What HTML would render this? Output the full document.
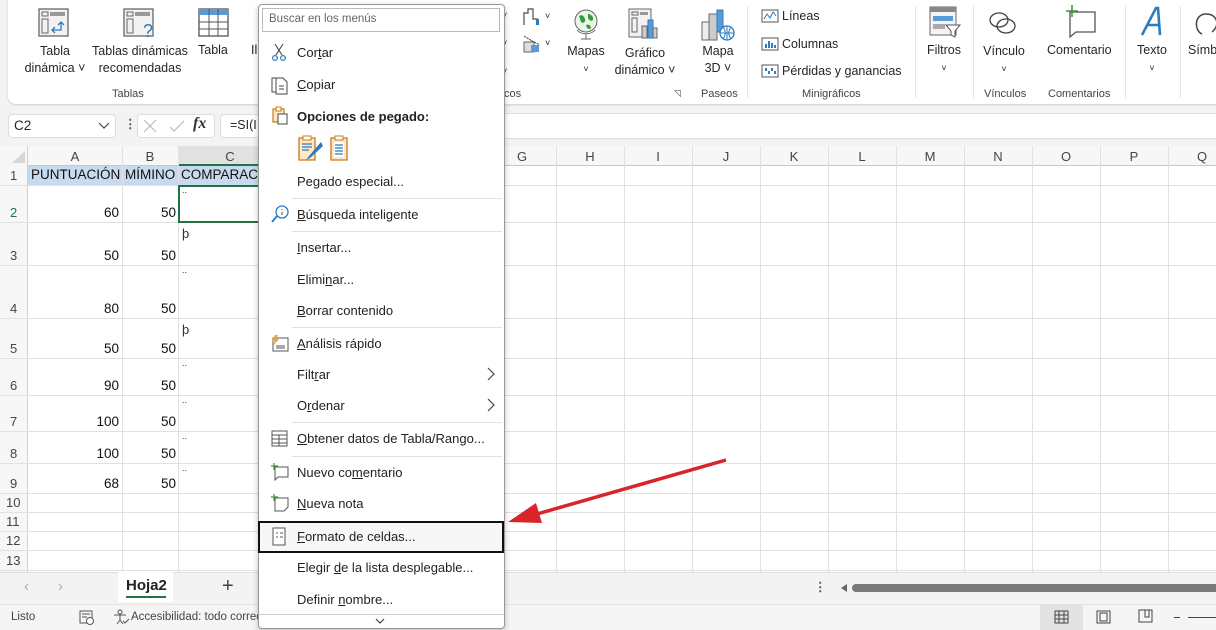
<!DOCTYPE html>
<html><head><meta charset="utf-8"><style>
*{margin:0;padding:0;box-sizing:border-box}
body{width:1216px;height:630px;overflow:hidden;background:#f3f3f3;font-family:"Liberation Sans",sans-serif;font-size:12.5px;color:#262626;position:relative}
.a{position:absolute}
.t{position:absolute;white-space:nowrap}
.c{text-align:center}
.vl{position:absolute;width:1px;background:#dcdcdc}
.hl{position:absolute;height:1px;background:#e1e1e1}
.mi{position:absolute;left:297px;font-size:13px;color:#222;white-space:nowrap}
.sep{position:absolute;left:292px;width:210px;height:1px;background:#e0e0e0}
u{text-decoration:underline}
</style></head><body>
<!-- ribbon -->
<div class="a" style="left:8px;top:-8px;width:1220px;height:112px;background:#fff;border-radius:8px;box-shadow:0 1px 2px #ccc"></div>
<svg class="a" style="left:38px;top:8px" width="32" height="30"><rect x="1" y="1" width="29" height="27" fill="#f2f2f2" stroke="#666" stroke-width="1.3"/><rect x="4" y="4" width="6" height="4" fill="none" stroke="#666"/><rect x="12" y="4" width="15" height="4" fill="#999"/><rect x="4" y="11" width="6" height="14" fill="none" stroke="#666"/><path d="M14 22h9v-8M20 17l3-3 3 3M17 19l-3 3 3 3" fill="none" stroke="#2b7bc0" stroke-width="1.3"/></svg>
<div class="t c" style="left:20px;top:43px;width:70px;line-height:17px">Tabla<br>dinámica ˅</div>
<svg class="a" style="left:123px;top:8px" width="36" height="30"><rect x="1" y="1" width="29" height="27" fill="#f2f2f2" stroke="#666" stroke-width="1.3"/><rect x="4" y="4" width="6" height="4" fill="none" stroke="#666"/><rect x="12" y="4" width="15" height="4" fill="#999"/><rect x="4" y="11" width="6" height="14" fill="none" stroke="#666"/><text x="20" y="29" font-size="18" fill="#2b7bc0" font-family="Liberation Sans">?</text></svg>
<div class="t c" style="left:90px;top:43px;width:100px;line-height:17px">Tablas dinámicas<br>recomendadas</div>
<svg class="a" style="left:198px;top:8px" width="32" height="30"><rect x="1" y="1" width="29" height="27" fill="#fff" stroke="#555" stroke-width="1.3"/><rect x="1" y="1" width="29" height="6" fill="#5b9bd5"/><path d="M1 14h29M1 21h29M11 1v27M20 1v27" stroke="#555"/></svg>
<div class="t" style="left:198px;top:43px">Tabla</div>
<div class="t" style="left:251px;top:43px">Il</div>
<div class="t" style="left:112px;top:88px;font-size:11px;color:#444">Tablas</div>
<div class="t" style="left:504px;top:88px;font-size:11px;color:#444">cos</div>
<div class="t" style="left:502px;top:10px;font-size:9px">˅</div><div class="t" style="left:502px;top:38px;font-size:9px">˅</div><div class="t" style="left:502px;top:66px;font-size:9px">˅</div>
<svg class="a" style="left:522px;top:7px" width="22" height="20"><path d="M2 18V6h4V2h5v10h4v6" fill="none" stroke="#666" stroke-width="1.4"/><rect x="14" y="12" width="3" height="6" fill="#2b7bc0"/></svg><div class="t" style="left:545px;top:11px;font-size:9px">˅</div>
<svg class="a" style="left:522px;top:34px" width="22" height="20"><rect x="2" y="8" width="10" height="10" fill="#ddd" stroke="#666"/><rect x="9" y="11" width="8" height="7" fill="#5b9bd5"/><path d="M2 2l8 5 8 4" stroke="#444" stroke-dasharray="2 1"/></svg><div class="t" style="left:545px;top:38px;font-size:9px">˅</div>
<svg class="a" style="left:571px;top:6px" width="30" height="36"><circle cx="15" cy="15" r="11" fill="#e8f5e8" stroke="#666"/><path d="M8 10c3-2 5 0 6 3s-2 5-4 3zM17 8c3 0 6 3 5 6-2 2-4 0-5-2zM15 19c2-1 5 0 5 3-2 2-4 1-5-3z" fill="#3a9a3a"/><path d="M6 24c4 5 14 5 18 0M15 28v5M10 33h10" stroke="#666" fill="none"/></svg>
<div class="t c" style="left:560px;top:43px;width:52px;line-height:17px">Mapas<br><span style="font-size:9px">˅</span></div>
<svg class="a" style="left:628px;top:8px" width="32" height="32"><rect x="1" y="1" width="22" height="28" fill="#f2f2f2" stroke="#666"/><rect x="4" y="4" width="6" height="3" fill="none" stroke="#666"/><rect x="12" y="4" width="8" height="3" fill="#999"/><rect x="4" y="10" width="5" height="14" fill="none" stroke="#666"/><rect x="14" y="18" width="5" height="12" fill="#ccc" stroke="#666"/><rect x="20" y="12" width="5" height="18" fill="#5b9bd5" stroke="#2b7bc0"/><rect x="25" y="20" width="4" height="10" fill="#ccc" stroke="#666"/></svg>
<div class="t c" style="left:610px;top:45px;width:70px;line-height:17px">Gráfico<br>dinámico ˅</div>
<div class="t" style="left:674px;top:88px;font-size:9px;color:#444">◹</div>
<svg class="a" style="left:700px;top:8px" width="36" height="34"><rect x="2" y="14" width="7" height="18" fill="#eee" stroke="#666"/><rect x="9" y="6" width="8" height="26" fill="#ccc" stroke="#666"/><rect x="17" y="2" width="6" height="22" fill="#5b9bd5" stroke="#2b7bc0"/><circle cx="27" cy="25" r="7" fill="#fff" stroke="#2b7bc0" stroke-width="1.3"/><path d="M20 25h14M27 18v14M23 19c3 4 3 8 0 12M31 19c-3 4-3 8 0 12" stroke="#2b7bc0" fill="none"/></svg>
<div class="t c" style="left:694px;top:43px;width:48px;line-height:17px">Mapa<br>3D ˅</div>
<div class="t" style="left:701px;top:88px;font-size:11px;color:#444">Paseos</div>
<div class="vl" style="left:747px;top:6px;height:92px;background:#e6e6e6"></div>
<svg class="a" style="left:761px;top:8px" width="18" height="16"><rect x="1" y="2" width="16" height="12" fill="#fff" stroke="#555"/><path d="M3 11l3-5 3 4 3-6 3 4" stroke="#2b7bc0" fill="none"/></svg><div class="t" style="left:782px;top:9px">Líneas</div>
<svg class="a" style="left:761px;top:36px" width="18" height="16"><rect x="1" y="2" width="16" height="12" fill="#fff" stroke="#555"/><path d="M5 12V8M8 12V5M11 12V7M14 12V9" stroke="#2b7bc0" stroke-width="2"/></svg><div class="t" style="left:782px;top:37px">Columnas</div>
<svg class="a" style="left:761px;top:63px" width="18" height="16"><rect x="1" y="2" width="16" height="12" fill="#fff" stroke="#555"/><path d="M5 8V5M8 11V8M11 8V5M14 11V8" stroke="#2b7bc0" stroke-width="2"/></svg><div class="t" style="left:782px;top:64px">Pérdidas y ganancias</div>
<div class="t" style="left:802px;top:88px;font-size:11px;color:#444">Minigráficos</div>
<div class="vl" style="left:915px;top:6px;height:92px;background:#e6e6e6"></div>
<svg class="a" style="left:928px;top:5px" width="34" height="34"><rect x="2" y="2" width="26" height="28" fill="#f4f4f4" stroke="#666"/><rect x="2" y="2" width="26" height="5" fill="#888"/><rect x="5" y="11" width="20" height="5" fill="#5b9bd5"/><rect x="5" y="19" width="12" height="5" fill="#aaa"/><path d="M18 20h14l-5 6v6l-4-2v-4z" fill="#fff" stroke="#555"/></svg>
<div class="t c" style="left:920px;top:42px;width:48px;line-height:17px">Filtros<br><span style="font-size:9px">˅</span></div>
<div class="vl" style="left:973px;top:6px;height:92px;background:#e6e6e6"></div>
<svg class="a" style="left:987px;top:10px" width="32" height="26"><ellipse cx="12" cy="10" rx="9" ry="7" fill="none" stroke="#444" stroke-width="1.3"/><ellipse cx="19" cy="16" rx="9" ry="7" fill="none" stroke="#444" stroke-width="1.3"/></svg>
<div class="t c" style="left:978px;top:43px;width:52px;line-height:17px">Vínculo<br><span style="font-size:9px">˅</span></div>
<div class="t" style="left:984px;top:88px;font-size:11px;color:#444">Vínculos</div>
<svg class="a" style="left:1062px;top:4px" width="36" height="34"><path d="M8 8h25v20H14l-6 5z" fill="#fff" stroke="#555" stroke-width="1.3"/><path d="M10 1v12M4 7h12" stroke="#3a9a3a" stroke-width="1.6"/></svg>
<div class="t" style="left:1047px;top:43px">Comentario</div>
<div class="t" style="left:1048px;top:88px;font-size:11px;color:#444">Comentarios</div>
<div class="vl" style="left:1125px;top:6px;height:92px;background:#e6e6e6"></div>
<svg class="a" style="left:1138px;top:5px" width="30" height="32"><path d="M4 30L18 3h2l2 27M9 20h13" fill="none" stroke="#2b7bc0" stroke-width="2.6"/></svg>
<div class="t c" style="left:1130px;top:42px;width:44px;line-height:17px">Texto<br><span style="font-size:9px">˅</span></div>
<div class="vl" style="left:1180px;top:6px;height:92px;background:#e6e6e6"></div>
<svg class="a" style="left:1190px;top:8px" width="26" height="30"><path d="M12 26c-8-3-8-20 4-20s14 12 6 18" fill="none" stroke="#444" stroke-width="1.5"/></svg>
<div class="t" style="left:1188px;top:43px">Símb</div>

<!-- formula bar -->
<div class="a" style="left:8px;top:114px;width:108px;height:24px;background:#fff;border-radius:4px;border:1px solid #ddd"></div>
<div class="t" style="left:14px;top:118px;font-size:13.5px">C2</div>
<svg class="a" style="left:98px;top:122px" width="12" height="8"><path d="M1 1l5 5 5-5" fill="none" stroke="#444" stroke-width="1.2"/></svg>
<div class="t" style="left:124px;top:116px;font-weight:bold;color:#555">⋮</div>
<div class="a" style="left:137px;top:114px;width:78px;height:24px;background:#fff;border-radius:4px;border:1px solid #ddd"></div>
<svg class="a" style="left:142px;top:118px" width="48" height="16"><path d="M2 2l12 12M14 2L2 14" stroke="#bbb" stroke-width="1.2"/><path d="M28 9l4 4 10-10" fill="none" stroke="#bbb" stroke-width="1.2"/></svg>
<div class="t" style="left:193px;top:115px;font-family:'Liberation Serif',serif;font-style:italic;font-size:16px;font-weight:bold;color:#333">fx</div>
<div class="a" style="left:220px;top:114px;width:60px;height:24px;background:#fff;border-radius:4px 0 0 4px;border:1px solid #ddd;border-right:none"></div>
<div class="t" style="left:230px;top:118px;font-size:12.5px">=SI(I</div>
<div class="a" style="left:504px;top:113px;width:712px;height:26px;background:#fff;border-top:1px solid #ddd;border-bottom:1px solid #ddd"></div>

<!-- grid -->
<div class="a" style="left:0;top:146px;width:1216px;height:426px;background:#fff"></div>
<div class="a" style="left:0;top:146px;width:1216px;height:20px;background:#f7f7f7;border-bottom:1px solid #c8c8c8"></div>
<div class="a" style="left:0;top:146px;width:28px;height:426px;background:#f7f7f7;border-right:1px solid #d0d0d0"></div>
<svg class="a" style="left:10px;top:150px" width="16" height="14"><path d="M15 1v12H2z" fill="#d6d6d6"/></svg>
<div class="a" style="left:178px;top:146px;width:104px;height:20px;background:#e1e1e1;border-bottom:2px solid #217346"></div>
<div class="a" style="left:28px;top:166px;width:254px;height:19px;background:#c8daed"></div>
<!-- col header lines & labels -->
<div id="cols"></div>
<script>
var s='';
var cols=[['A',28,122],['B',122,178],['C',178,282],['D',282,350],['E',350,418],['F',418,488],['G',488,556],['H',556,624],['I',624,692],['J',692,760],['K',760,828],['L',828,896],['M',896,964],['N',964,1032],['O',1032,1100],['P',1100,1168],['Q',1168,1236]];
cols.forEach(function(c){s+='<div class="vl" style="left:'+c[2]+'px;top:146px;height:426px;background:#e1e1e1"></div>';s+='<div class="t c" style="left:'+c[1]+'px;top:149px;width:'+(c[2]-c[1])+'px;font-size:13px;color:#444">'+c[0]+'</div>';});
var rows=[165,185,222,265,318,358,395,431,463,493,512,531,550,570];
for(var i=0;i<13;i++){var top=rows[i],b=rows[i+1];s+='<div class="hl" style="left:0;top:'+b+'px;width:1216px"></div>';s+='<div class="t" style="left:'+(i<9?10:6)+'px;top:'+(b-17)+'px;font-size:13px;color:'+(i==1?'#217346':'#444')+'">'+(i+1)+'</div>';}
var A=[60,50,80,50,90,100,100,68];
for(var i=0;i<8;i++){var b=rows[i+2];s+='<div class="t" style="left:28px;width:91px;text-align:right;top:'+(b-17)+'px;font-size:13.5px;color:#111">'+A[i]+'</div><div class="t" style="left:122px;width:54px;text-align:right;top:'+(b-17)+'px;font-size:13.5px;color:#111">50</div>';var t=rows[i+1];s+='<div class="t" style="left:182px;top:'+(t+(i==1||i==3?4:0))+'px;font-size:'+(i==1||i==3?'13':'9')+'px;color:#333">'+(i==1||i==3?'þ':'..')+'</div>';}
document.getElementById('cols').innerHTML=s;
</script>
<div class="t" style="left:31px;top:167px;font-size:13.5px;color:#111">PUNTUACIÓN</div>
<div class="t" style="left:125px;top:167px;font-size:13.5px;color:#111">MÍMINO</div>
<div class="t" style="left:181px;top:167px;font-size:13.5px;color:#111">COMPARAC</div>
<div class="a" style="left:178px;top:185px;width:86px;height:38px;border:2px solid #217346"></div>

<!-- sheet tabs -->
<div class="a" style="left:0;top:572px;width:1216px;height:32px;background:#f3f3f3;border-top:1px solid #ddd"></div>
<div class="t" style="left:24px;top:578px;font-size:15px;color:#aaa">‹</div>
<div class="t" style="left:58px;top:578px;font-size:15px;color:#aaa">›</div>
<div class="a" style="left:118px;top:572px;width:55px;height:30px;background:#fff"></div>
<div class="t" style="left:126px;top:577px;font-size:15px;font-weight:bold;color:#222">Hoja2</div>
<div class="a" style="left:126px;top:596px;width:40px;height:2px;background:#217346"></div>
<div class="t" style="left:222px;top:575px;font-size:20px;color:#444">+</div>
<div class="t" style="left:814px;top:579px;font-weight:bold;color:#555">⋮</div>
<svg class="a" style="left:840px;top:583px" width="376" height="10"><path d="M1 5l6-4v8z" fill="#666"/><rect x="12" y="1" width="380" height="8" rx="4" fill="#7a7a7a"/></svg>
<!-- status bar -->
<div class="a" style="left:0;top:604px;width:1216px;height:26px;background:#f5f5f5;border-top:1px solid #e4e4e4"></div>
<div class="t" style="left:11px;top:611px;font-size:11.5px;color:#444">Listo</div>
<svg class="a" style="left:79px;top:610px" width="16" height="15"><rect x="1" y="1" width="12" height="12" fill="none" stroke="#555"/><path d="M3 4h8M3 7h5" stroke="#555"/><circle cx="11" cy="11" r="3.5" fill="#fff" stroke="#555"/></svg>
<svg class="a" style="left:112px;top:609px" width="18" height="16"><circle cx="8" cy="3" r="2" fill="none" stroke="#555"/><path d="M2 6h12M8 6v5l-3 4M8 11l3 4M11 12l2 2 4-4" fill="none" stroke="#555"/></svg>
<div class="t" style="left:131px;top:611px;font-size:11.5px;color:#444">Accesibilidad: todo correc</div>
<div class="a" style="left:1040px;top:605px;width:43px;height:25px;background:#e2e2e2"></div>
<svg class="a" style="left:1054px;top:610px" width="16" height="14"><rect x="1" y="1" width="13" height="12" fill="none" stroke="#444"/><path d="M1 5h13M1 9h13M5 1v12M10 1v12" stroke="#444"/></svg>
<svg class="a" style="left:1096px;top:610px" width="16" height="14"><rect x="1" y="1" width="13" height="12" fill="none" stroke="#444"/><rect x="4" y="3" width="7" height="8" fill="none" stroke="#444"/></svg>
<svg class="a" style="left:1138px;top:609px" width="16" height="14"><rect x="1" y="1" width="13" height="12" fill="none" stroke="#444"/><path d="M7 1v7h4V1" fill="none" stroke="#444"/></svg>
<div class="a" style="left:1174px;top:617px;width:6px;height:1px;background:#444"></div>
<div class="a" style="left:1188px;top:617px;width:28px;height:1px;background:#444"></div>

<!-- context menu -->
<div class="a" style="left:258px;top:4px;width:247px;height:625px;background:#fff;border:1px solid #999;border-radius:4px;box-shadow:0 2px 6px rgba(0,0,0,.25)"></div>
<div class="a" style="left:262px;top:8px;width:238px;height:24px;border:1px solid #bbb;background:#fff"></div>
<div class="t" style="left:269px;top:13px;font-size:11.5px;color:#666">Buscar en los menús</div>
<svg class="a" style="left:271px;top:43px" width="16" height="20"><path d="M4 1l7 11M12 1L5 12" stroke="#444" stroke-width="1.1"/><circle cx="4" cy="15" r="2.4" fill="none" stroke="#2b7bc0" stroke-width="1.2"/><circle cx="12" cy="15" r="2.4" fill="none" stroke="#2b7bc0" stroke-width="1.2"/></svg>
<div class="mi" style="top:45px">Cor<u>t</u>ar</div>
<svg class="a" style="left:270px;top:75px" width="20" height="20"><path d="M6 3H2v14h5" fill="none" stroke="#444"/><path d="M6 3h7l4 4v12H6z" fill="#fff" stroke="#444"/><path d="M9 11h5M9 14h5" stroke="#444"/></svg>
<div class="mi" style="top:77px"><u>C</u>opiar</div>
<svg class="a" style="left:270px;top:106px" width="20" height="20"><path d="M3 3h11v13H3z" fill="#fde9c8" stroke="#c77b1a" stroke-width="1.2"/><rect x="6" y="1" width="5" height="4" fill="#fff" stroke="#c77b1a"/><rect x="8" y="8" width="9" height="10" fill="#fff" stroke="#444"/></svg>
<div class="mi" style="top:109px;font-weight:bold">Opciones de pegado:</div>
<svg class="a" style="left:297px;top:134px" width="28" height="28"><path d="M2 4h16v22H2z" fill="#fde9c8" stroke="#c77b1a" stroke-width="1.3"/><rect x="6" y="2" width="8" height="4" fill="#fff" stroke="#c77b1a"/><path d="M5 10h10M5 13h10M5 16h7" stroke="#2b7bc0" stroke-width="1.3"/><path d="M24 8l-12 14-3 4 4-2 13-12z" fill="#2b7bc0"/></svg>
<svg class="a" style="left:329px;top:134px" width="22" height="28"><path d="M2 4h16v22H2z" fill="#fde9c8" stroke="#c77b1a" stroke-width="1.3"/><rect x="6" y="2" width="8" height="4" fill="#fff" stroke="#c77b1a"/><rect x="5" y="8" width="10" height="15" fill="#fff"/><path d="M6 11h8M6 14h8M6 17h8M6 20h8" stroke="#2b7bc0" stroke-width="1.2"/></svg>
<div class="mi" style="top:174px">Pegado especial...</div>
<div class="sep" style="top:198px"></div>
<svg class="a" style="left:270px;top:204px" width="20" height="20"><circle cx="12" cy="8" r="6" fill="none" stroke="#2b7bc0" stroke-width="1.3"/><path d="M7 12l-5 6" stroke="#2b7bc0" stroke-width="1.8"/><path d="M12 5v1M12 8v3" stroke="#2b7bc0" stroke-width="1.3"/></svg>
<div class="mi" style="top:207px"><u>B</u>úsqueda inteligente</div>
<div class="sep" style="top:231px"></div>
<div class="mi" style="top:240px"><u>I</u>nsertar...</div>
<div class="mi" style="top:272px">Elimi<u>n</u>ar...</div>
<div class="mi" style="top:303px"><u>B</u>orrar contenido</div>
<div class="sep" style="top:327px"></div>
<svg class="a" style="left:270px;top:334px" width="20" height="20"><rect x="3" y="4" width="15" height="13" fill="#fff" stroke="#555"/><path d="M6 12h9M6 14h9" stroke="#555"/><path d="M5 1l-3 6h3l-2 5 6-7H6l2-4z" fill="#e8a33d"/></svg>
<div class="mi" style="top:336px"><u>A</u>nálisis rápido</div>
<div class="mi" style="top:367px">Filt<u>r</u>ar</div>
<svg class="a" style="left:486px;top:367px" width="10" height="14"><path d="M2 1l6 6-6 6" fill="none" stroke="#444" stroke-width="1.2"/></svg>
<div class="mi" style="top:398px">O<u>r</u>denar</div>
<svg class="a" style="left:486px;top:398px" width="10" height="14"><path d="M2 1l6 6-6 6" fill="none" stroke="#444" stroke-width="1.2"/></svg>
<div class="sep" style="top:422px"></div>
<svg class="a" style="left:270px;top:429px" width="20" height="20"><rect x="2" y="2" width="15" height="15" fill="#fff" stroke="#555"/><path d="M2 6h15M2 10h15M2 14h15M9 6v11" stroke="#555"/></svg>
<div class="mi" style="top:431px"><u>O</u>btener datos de Tabla/Rango...</div>
<div class="sep" style="top:456px"></div>
<svg class="a" style="left:270px;top:462px" width="20" height="20"><path d="M5 5h13v10H8l-3 3z" fill="#fff" stroke="#555"/><path d="M4 1v7M1 4h7" stroke="#3a9a3a" stroke-width="1.3"/></svg>
<div class="mi" style="top:465px">Nuevo co<u>m</u>entario</div>
<svg class="a" style="left:270px;top:493px" width="20" height="20"><path d="M5 5h13v9l-4 4H5z" fill="#fff" stroke="#555"/><path d="M4 1v7M1 4h7" stroke="#3a9a3a" stroke-width="1.3"/></svg>
<div class="mi" style="top:496px"><u>N</u>ueva nota</div>
<div class="a" style="left:258px;top:521px;width:246px;height:32px;border:2.5px solid #111;background:#f7f7f7"></div>
<svg class="a" style="left:272px;top:527px" width="16" height="20"><rect x="1" y="1" width="12" height="17" fill="#fff" stroke="#555"/><path d="M4 6h2M8 6h3M4 10h2M8 10h3" stroke="#555"/></svg>
<div class="mi" style="top:529px"><u>F</u>ormato de celdas...</div>
<div class="mi" style="top:560px">Elegir <u>d</u>e la lista desplegable...</div>
<div class="mi" style="top:592px">Definir <u>n</u>ombre...</div>
<div class="a" style="left:259px;top:614px;width:245px;height:1px;background:#ccc"></div>
<svg class="a" style="left:375px;top:618px" width="10" height="7"><path d="M1 1l4 4 4-4" fill="none" stroke="#444" stroke-width="1.2"/></svg>

<!-- red arrow -->
<svg class="a" style="left:500px;top:450px" width="240" height="80"><path d="M226 10L30 66" stroke="#d9252a" stroke-width="3.5"/><path d="M8 72L36 53l6 20z" fill="#d9252a"/></svg>
</body></html>
